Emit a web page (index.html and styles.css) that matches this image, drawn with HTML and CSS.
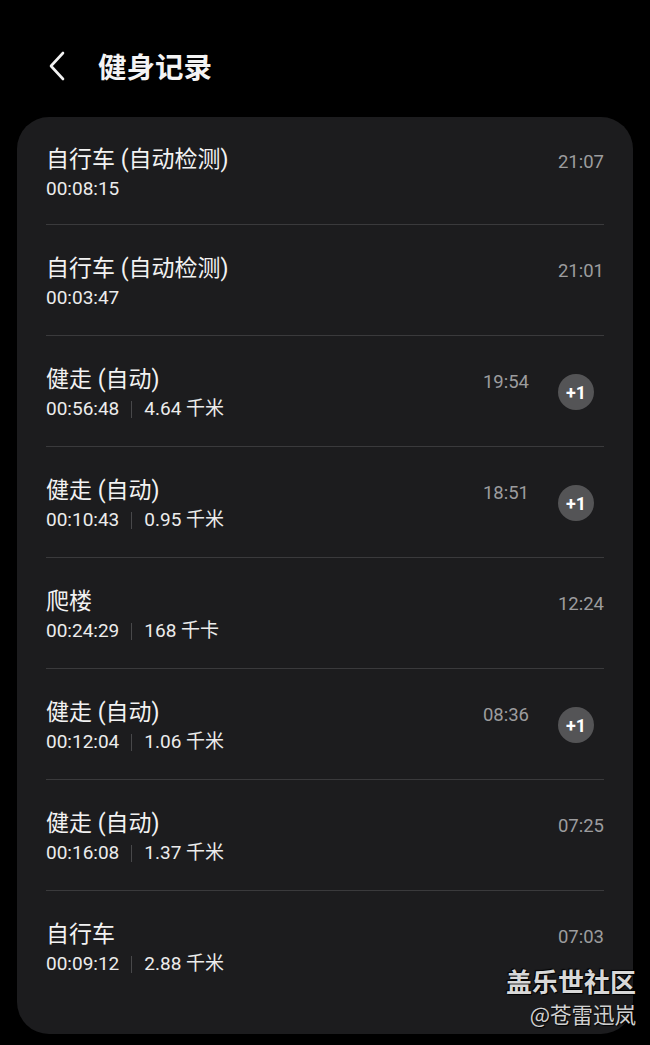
FILE: index.html
```html
<!DOCTYPE html>
<html lang="zh">
<head>
<meta charset="utf-8">
<link rel="stylesheet" href="styles.css">
</head>
<body>
<div class="screen">
  <header class="header">
    <svg class="back" width="20" height="30" viewBox="0 0 20 30"><path d="M16 2 L4 15 L16 28" fill="none" stroke="#f2f2f2" stroke-width="2.6" stroke-linecap="round" stroke-linejoin="round"/></svg>
    <h1 class="title">健身记录</h1>
  </header>
  <main class="card">
    <div class="row">
      <div class="info"><div class="name">自行车 (自动检测)</div><div class="sub">00:08:15</div></div>
      <div class="time">21:07</div>
    </div>
    <div class="row">
      <div class="info"><div class="name">自行车 (自动检测)</div><div class="sub">00:03:47</div></div>
      <div class="time">21:01</div>
    </div>
    <div class="row">
      <div class="info"><div class="name">健走 (自动)</div><div class="sub">00:56:48<span class="bar"></span>4.64 千米</div></div>
      <div class="time">19:54</div><div class="badge">+1</div>
    </div>
    <div class="row">
      <div class="info"><div class="name">健走 (自动)</div><div class="sub">00:10:43<span class="bar"></span>0.95 千米</div></div>
      <div class="time">18:51</div><div class="badge">+1</div>
    </div>
    <div class="row">
      <div class="info"><div class="name">爬楼</div><div class="sub">00:24:29<span class="bar"></span>168 千卡</div></div>
      <div class="time">12:24</div>
    </div>
    <div class="row">
      <div class="info"><div class="name">健走 (自动)</div><div class="sub">00:12:04<span class="bar"></span>1.06 千米</div></div>
      <div class="time">08:36</div><div class="badge">+1</div>
    </div>
    <div class="row">
      <div class="info"><div class="name">健走 (自动)</div><div class="sub">00:16:08<span class="bar"></span>1.37 千米</div></div>
      <div class="time">07:25</div>
    </div>
    <div class="row last">
      <div class="info"><div class="name">自行车</div><div class="sub">00:09:12<span class="bar"></span>2.88 千米</div></div>
      <div class="time">07:03</div>
    </div>
  </main>
  <div class="watermark">
    <div class="wm-main">盖乐世社区</div>
    <div class="wm-sub">@苍雷迅岚</div>
  </div>
</div>
</body>
</html>
```

FILE: styles.css
```css
html, body {
  margin: 0;
  padding: 0;
  background: #000;
}
body {
  font-family: Roboto, "Noto Sans CJK SC", sans-serif;
  color: #f0f0f0;
}
.screen {
  position: relative;
  width: 650px;
  height: 1045px;
  overflow: hidden;
}
.header {
  height: 117px;
  display: flex;
  align-items: center;
  padding-left: 47px;
  padding-top: 15px;
  box-sizing: border-box;
}
.back {
  display: block;
}
.title {
  margin: 0 0 0 31px;
  font-size: 28.5px;
  font-weight: 700;
  line-height: 34px;
  color: #f4f4f4;
  font-family: "Noto Sans CJK SC", sans-serif;
}
.card {
  margin: 0 17px;
  height: 917px;
  box-sizing: border-box;
  background: #1c1c1e;
  border-radius: 32px;
  padding: 0 29px;
}
.row {
  display: flex;
  align-items: flex-start;
  height: 111px;
  box-sizing: border-box;
  padding-top: 31px;
  border-bottom: 1px solid #3a3a3c;
}
.row:first-child {
  height: 108px;
  padding-top: 30px;
}
.row.last {
  border-bottom: none;
}
.info {
  flex: 1;
}
.name {
  font-size: 23px;
  line-height: 26px;
  color: #f2f2f2;
}
.sub {
  margin-top: 4px;
  font-size: 19px;
  line-height: 24px;
  color: #ececec;
  display: flex;
  align-items: center;
}
.bar {
  display: inline-block;
  width: 1px;
  height: 17px;
  background: #48484a;
  margin: 0 12px;
}
.time {
  padding-top: 3px;
  font-size: 18.5px;
  line-height: 24px;
  color: #9c9c9e;
}
.badge {
  margin: 7px 10px 0 29px;
  width: 36px;
  height: 36px;
  border-radius: 50%;
  background: #545456;
  color: #fff;
  font-size: 18px;
  font-weight: 700;
  display: flex;
  align-items: center;
  justify-content: center;
}
.watermark {
  position: absolute;
  right: 14px;
  bottom: 16px;
  text-align: right;
  font-family: "Noto Sans CJK SC", sans-serif;
}
.wm-main {
  font-size: 26px;
  font-weight: 700;
  line-height: 32px;
  margin-bottom: 2px;
  color: #d8d8d8;
  text-shadow: 1px 1px 1px #000, -1px -1px 1px #000;
}
.wm-sub {
  font-size: 21.5px;
  line-height: 30px;
  color: #d0d0d0;
  text-shadow: 1px 1px 1px #000;
}
```
